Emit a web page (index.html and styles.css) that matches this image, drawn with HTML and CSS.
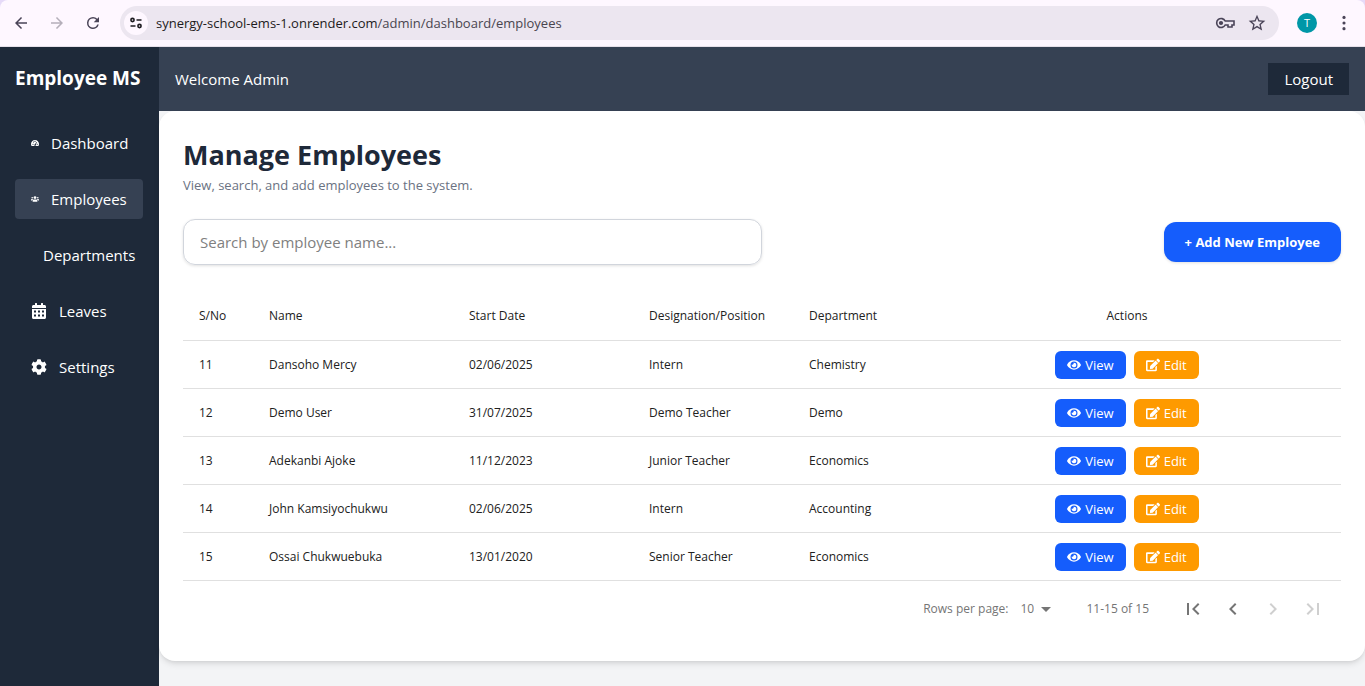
FILE: index.html
```
<!DOCTYPE html>
<html lang="en">
<head>
<meta charset="utf-8">
<title>Employee MS</title>
<link rel="stylesheet" href="styles.css">
</head>
<body>
<svg class="sprite" aria-hidden="true">
  <symbol id="eye" viewBox="0 0 576 512"><path d="M572.52 241.4C518.29 135.59 410.93 64 288 64S57.68 135.64 3.48 241.41a32.35 32.35 0 0 0 0 29.19C57.71 376.41 165.07 448 288 448s230.32-71.64 284.52-177.41a32.35 32.35 0 0 0 0-29.19zM288 400a144 144 0 1 1 144-144 143.93 143.93 0 0 1-144 144zm0-240a95.31 95.31 0 0 0-25.31 3.79 47.85 47.85 0 0 1-66.9 66.9A95.78 95.78 0 1 0 288 160z"/></symbol>
  <symbol id="edit" viewBox="0 0 576 512"><path d="M402.6 83.2l90.2 90.2c3.8 3.8 3.8 10 0 13.8L274.4 405.6l-92.8 10.3c-12.4 1.4-22.9-9.1-21.5-21.5l10.3-92.8L388.8 83.2c3.8-3.8 10-3.8 13.8 0zm162-22.9l-48.8-48.8c-15.2-15.2-39.9-15.2-55.2 0l-35.4 35.4c-3.8 3.8-3.8 10 0 13.8l90.2 90.2c3.8 3.8 10 3.8 13.8 0l35.4-35.4c15.2-15.3 15.2-40 0-55.2zM384 346.2V448H64V128h229.8c3.2 0 6.2-1.3 8.5-3.5l40-40c7.6-7.6 2.2-20.5-8.5-20.5H48C21.5 64 0 85.5 0 112v352c0 26.5 21.5 48 48 48h352c26.5 0 48-21.5 48-48V306.2c0-10.7-12.9-16-20.5-8.5l-40 40c-2.2 2.3-3.5 5.3-3.5 8.5z"/></symbol>
</svg>

<header class="browser">
  <div class="toolbar">
    <button class="tool" aria-label="Back"><svg viewBox="0 0 24 24"><path d="M20 11H7.83l5.59-5.59L12 4l-8 8 8 8 1.41-1.41L7.83 13H20z"/></svg></button>
    <button class="tool tool-off" aria-label="Forward" disabled><svg viewBox="0 0 24 24"><path d="M4 11h12.17l-5.59-5.59L12 4l8 8-8 8-1.41-1.41L16.17 13H4z"/></svg></button>
    <button class="tool" aria-label="Reload"><svg viewBox="0 0 24 24"><path d="M17.65 6.35A7.96 7.96 0 0 0 12 4a8 8 0 1 0 7.73 10h-2.08A6 6 0 1 1 12 6c1.66 0 3.14.69 4.22 1.78L13 11h7V4z"/></svg></button>
    <div class="omnibox">
      <button class="site-info" aria-label="Site information"><svg viewBox="0 0 16 16" fill="none" stroke="currentColor" stroke-width="1.6"><circle cx="4.500" cy="5" r="1.600"/><path d="M8.500 5H13.500M2.500 11h5"/><circle cx="11.500" cy="11" r="1.600"/></svg></button>
      <span class="url">synergy-school-ems-1.onrender.com<span class="url-path">/admin/dashboard/employees</span></span>
      <button class="omni-btn" aria-label="Passwords"><svg viewBox="0 0 20 20" fill="none" stroke="currentColor" stroke-width="1.600"><path d="M10.200 8A4.500 4.500 0 1 0 10.200 12H13V14H17V12H19V8Z"/><circle cx="6" cy="10" r="1.300" fill="currentColor"/></svg></button>
      <button class="omni-btn" aria-label="Bookmark"><svg viewBox="0 0 24 24" fill="currentColor"><path d="M22 9.240l-7.190-.62L12 2 9.190 8.630 2 9.240l5.460 4.730L5.820 21 12 17.270 18.180 21l-1.630-7.030L22 9.240zM12 15.400l-3.760 2.270 1-4.280-3.320-2.880 4.380-.38L12 6.100l1.710 4.040 4.380.38-3.320 2.880 1 4.280L12 15.400z"/></svg></button>
    </div>
    <button class="profile" aria-label="Profile T">T</button>
    <button class="tool" aria-label="Menu"><svg viewBox="0 0 24 24"><circle cx="12" cy="4.500" r="2.100"/><circle cx="12" cy="12" r="2.100"/><circle cx="12" cy="19.500" r="2.100"/></svg></button>
  </div>
</header>

<div class="app">
  <aside class="sidebar">
    <h2 class="brand">Employee MS</h2>
    <nav class="nav">
      <a class="nav-link" href="#dashboard"><svg class="icon-tiny" viewBox="0 0 576 512"><path fill-rule="evenodd" d="M288 32C129 32 0 161 0 320c0 53 14 102 39 145 6 9 16 15 27 15h444c11 0 21-6 27-15 25-43 39-92 39-145C576 161 447 32 288 32zM144 385a42 42 0 1 1 0-84 42 42 0 0 1 0 84zm36-160a38 38 0 1 1 0-76 38 38 0 0 1 0 76zm108-125a40 40 0 1 1 0 80 40 40 0 0 1 0-80zm100 75l40 18-76 176c18 40-8 79-30 79h-68c-40-30-20-96 35-104zM448 385a42 42 0 1 1 0-84 42 42 0 0 1 0 84z"/></svg>Dashboard</a>
      <a class="nav-link nav-active" href="#employees"><svg class="icon-tiny" viewBox="0 0 640 512"><circle cx="96" cy="160" r="64"/><circle cx="544" cy="160" r="64"/><circle cx="320" cy="144" r="112"/><path d="M64 256h64c18 0 34 7 45 19-40 22-69 61-75 109H32c-18 0-32-14-32-32v-32c0-35 29-64 64-64zM512 256h64c35 0 64 29 64 64v32c0 18-14 32-32 32h-66c-6-48-35-87-75-109 11-12 27-19 45-19zM243 288h154c64 0 115 52 115 115v29c0 26-22 48-48 48H176c-26 0-48-22-48-48v-29c0-63 51-115 115-115z"/></svg>Employees</a>
      <a class="nav-link" href="#departments"><span></span>Departments</a>
      <a class="nav-link" href="#leaves"><svg class="icon" viewBox="0 0 448 512"><path fill-rule="evenodd" d="M0 464c0 26.500 21.500 48 48 48h352c26.500 0 48-21.500 48-48V192H0zM64 240h64v64H64zm128 0h64v64h-64zm128 0h64v64h-64zM64 368h64v64H64zm128 0h64v64h-64zm128 0h64v64h-64zM400 64h-48V16c0-9-7-16-16-16h-32c-9 0-16 7-16 16v48H160V16c0-9-7-16-16-16h-32c-9 0-16 7-16 16v48H48C21.500 64 0 85.500 0 112v48h448v-48c0-26.500-21.500-48-48-48z"/></svg>Leaves</a>
      <a class="nav-link" href="#settings"><svg class="icon" viewBox="0 0 512 512"><path d="M487.400 315.700l-42.600-24.600c4.300-23.200 4.300-47 0-70.200l42.600-24.600c4.900-2.800 7.100-8.600 5.500-14-11.100-35.600-30-67.800-54.700-94.600-3.800-4.100-10-5.100-14.800-2.300L380.800 110c-17.900-15.400-38.500-27.300-60.800-35.100V25.800c0-5.600-3.900-10.500-9.400-11.700-36.700-8.200-74.300-7.800-109.200 0-5.500 1.200-9.400 6.100-9.400 11.700V75c-22.200 7.900-42.800 19.800-60.800 35.100L88.700 85.500c-4.900-2.800-11-1.900-14.800 2.300-24.700 26.700-43.600 58.900-54.700 94.600-1.700 5.400.6 11.200 5.500 14L67.300 221c-4.300 23.200-4.300 47 0 70.200l-42.600 24.600c-4.900 2.800-7.100 8.600-5.500 14 11.100 35.600 30 67.800 54.700 94.600 3.800 4.100 10 5.100 14.800 2.300l42.600-24.600c17.900 15.400 38.500 27.300 60.800 35.100v49.200c0 5.600 3.900 10.500 9.400 11.700 36.700 8.200 74.300 7.800 109.200 0 5.500-1.200 9.400-6.100 9.400-11.700v-49.200c22.200-7.900 42.800-19.800 60.800-35.100l42.600 24.600c4.900 2.800 11 1.900 14.800-2.300 24.700-26.700 43.600-58.900 54.700-94.600 1.500-5.500-.7-11.300-5.600-14.100zM256 336c-44.100 0-80-35.900-80-80s35.900-80 80-80 80 35.900 80 80-35.900 80-80 80z"/></svg>Settings</a>
    </nav>
  </aside>

  <div class="content">
    <div class="topbar">
      <p class="welcome">Welcome Admin</p>
      <button class="logout">Logout</button>
    </div>
    <main class="card">
      <h1 class="title">Manage Employees</h1>
      <p class="subtitle">View, search, and add employees to the system.</p>
      <div class="actions-bar">
        <input class="search" type="text" aria-label="Search by employee name" placeholder="Search by employee name...">
        <a class="add" href="#add">+ Add New Employee</a>
      </div>
      <table class="table">
        <colgroup><col class="col-no"><col class="col-name"><col class="col-date"><col class="col-role"><col class="col-dept"><col></colgroup>
        <thead>
          <tr><th>S/No</th><th>Name</th><th>Start Date</th><th>Designation/Position</th><th>Department</th><th class="center">Actions</th></tr>
        </thead>
        <tbody>
          <tr><td>11</td><td>Dansoho Mercy</td><td>02/06/2025</td><td>Intern</td><td>Chemistry</td><td><div class="row-actions"><button class="btn view"><svg><use href="#eye"/></svg>View</button><button class="btn edit"><svg><use href="#edit"/></svg>Edit</button></div></td></tr>
          <tr><td>12</td><td>Demo User</td><td>31/07/2025</td><td>Demo Teacher</td><td>Demo</td><td><div class="row-actions"><button class="btn view"><svg><use href="#eye"/></svg>View</button><button class="btn edit"><svg><use href="#edit"/></svg>Edit</button></div></td></tr>
          <tr><td>13</td><td>Adekanbi Ajoke</td><td>11/12/2023</td><td>Junior Teacher</td><td>Economics</td><td><div class="row-actions"><button class="btn view"><svg><use href="#eye"/></svg>View</button><button class="btn edit"><svg><use href="#edit"/></svg>Edit</button></div></td></tr>
          <tr><td>14</td><td>John Kamsiyochukwu</td><td>02/06/2025</td><td>Intern</td><td>Accounting</td><td><div class="row-actions"><button class="btn view"><svg><use href="#eye"/></svg>View</button><button class="btn edit"><svg><use href="#edit"/></svg>Edit</button></div></td></tr>
          <tr><td>15</td><td>Ossai Chukwuebuka</td><td>13/01/2020</td><td>Senior Teacher</td><td>Economics</td><td><div class="row-actions"><button class="btn view"><svg><use href="#eye"/></svg>View</button><button class="btn edit"><svg><use href="#edit"/></svg>Edit</button></div></td></tr>
        </tbody>
      </table>
      <div class="pagination">
        <label for="rows">Rows per page:</label>
        <span class="rows"><select id="rows"><option>10</option><option>15</option><option>20</option></select><svg viewBox="0 0 24 24"><path d="M7 10l5 5 5-5z"/></svg></span>
        <span class="range">11-15 of 15</span>
        <div class="pages">
          <button aria-label="First page"><svg viewBox="0 0 24 24"><path d="M18.410 16.590L13.820 12l4.590-4.590L17 6l-6 6 6 6zM6 6h2v12H6z"/></svg></button>
          <button aria-label="Previous page"><svg viewBox="0 0 24 24"><path d="M15.410 7.410L14 6l-6 6 6 6 1.410-1.410L10.830 12z"/></svg></button>
          <button aria-label="Next page" disabled><svg viewBox="0 0 24 24"><path d="M10 6L8.590 7.410 13.170 12l-4.580 4.590L10 18l6-6z"/></svg></button>
          <button aria-label="Last page" disabled><svg viewBox="0 0 24 24"><path d="M5.590 7.410L10.180 12l-4.590 4.590L7 18l6-6-6-6zM16 6h2v12h-2z"/></svg></button>
        </div>
      </div>
    </main>
  </div>
</div>
</body>
</html>
```
FILE: styles.css
```
* {
  box-sizing: border-box;
  margin: 0;
}

body {
  display: flex;
  flex-direction: column;
  min-height: 100vh;
  font-family: "Segoe UI", "Open Sans", "Noto Sans", sans-serif;
  font-size: 16px;
  line-height: 24px;
  background: #f3f4f6;
}

button, input, select {
  font: inherit;
  color: inherit;
  border: 0;
  padding: 0;
  background: none;
}

a {
  color: inherit;
  text-decoration: none;
}

svg {
  display: block;
  flex: none;
  fill: currentColor;
}

.sprite {
  display: none;
}

/* Browser toolbar */
.browser {
  background: #e6daf8;
}

.toolbar {
  display: flex;
  align-items: center;
  height: 47px;
  padding: 0 12px;
  gap: 18px;
  border-bottom: 1px solid #e6e0e9;
  border-radius: 8px 8px 0 0;
  background: #fef7ff;
  color: #4a4458;
}

.tool svg {
  width: 18px;
  height: 18px;
}

.tool-off {
  color: #b5afba;
}

.omnibox {
  flex: 1;
  display: flex;
  align-items: center;
  gap: 8px;
  height: 34px;
  padding: 0 12px 0 4px;
  border-radius: 17px;
  background: #ece6f0;
}

.site-info {
  display: grid;
  place-items: center;
  width: 24px;
  height: 24px;
  border-radius: 50%;
  background: #fef7ff;
  color: #1d1b20;
}

.site-info svg {
  width: 16px;
  height: 16px;
}

.url {
  flex: 1;
  font-size: 13px;
  line-height: 20px;
  color: #1d1b20;
}

.url-path {
  color: #49454f;
}

.omni-btn {
  margin-left: 4px;
}

.omni-btn svg {
  width: 20px;
  height: 20px;
}

.omni-btn svg[fill="none"],
.site-info svg {
  fill: none;
}

.profile {
  width: 20px;
  height: 20px;
  border-radius: 50%;
  font-size: 11px;
  line-height: 20px;
  color: #fff;
  background: #0097a7;
}

/* Application shell */
.app {
  flex: 1;
  display: flex;
}

.sidebar {
  flex: none;
  width: 159px;
  padding: 17px 16px 16px 15px;
  color: #fff;
  background: #1e2939;
}

.brand {
  font-size: 19px;
  line-height: 28px;
  font-weight: 700;
  white-space: nowrap;
}

.nav {
  display: flex;
  flex-direction: column;
  gap: 16px;
  margin-top: 31px;
}

.nav-link {
  display: flex;
  align-items: center;
  gap: 12px;
  height: 40px;
  padding: 0 8px 0 16px;
  border-radius: 4px;
  font-size: 15px;
}

.nav-active {
  background: #364153;
}

.icon {
  width: 16px;
  height: 16px;
}

.icon-tiny {
  width: 8px;
  height: 8px;
}

.content {
  flex: 1;
  min-width: 0;
}

.topbar {
  display: flex;
  align-items: center;
  justify-content: space-between;
  height: 64px;
  padding: 0 16px;
  color: #fff;
  background: #364153;
  font-size: 15px;
}

.logout {
  padding: 4px 16px;
  background: #1e2939;
}

/* Employees card */
.card {
  padding: 24px;
  border-radius: 16px;
  background: #fff;
  box-shadow: 0 4px 6px -1px rgba(0, 0, 0, 0.1), 0 2px 4px -2px rgba(0, 0, 0, 0.1);
}

.title {
  font-size: 27px;
  line-height: 40px;
  font-weight: 700;
  color: #1e2939;
}

.subtitle {
  font-size: 13px;
  line-height: 20px;
  color: #6a7282;
}

.actions-bar {
  display: flex;
  align-items: center;
  justify-content: space-between;
  margin: 24px 0 25px;
}

.search {
  width: 50%;
  height: 46px;
  padding: 0 16px;
  border: 1px solid #d1d5dc;
  border-radius: 12px;
  font-size: 15px;
  box-shadow: 0 1px 3px rgba(0, 0, 0, 0.12);
}

.search::placeholder {
  color: #808080;
  opacity: 1;
}

.add {
  padding: 10px 21px;
  border-radius: 12px;
  font-size: 13px;
  line-height: 20px;
  font-weight: 700;
  color: #fff;
  background: #155dfc;
  box-shadow: 0 1px 3px rgba(0, 0, 0, 0.12);
}

.table {
  width: 100%;
  table-layout: fixed;
  border-collapse: separate;
  border-spacing: 0;
  font-size: 12px;
  line-height: 20px;
  color: #212121;
}

.col-no { width: 70px; }
.col-name { width: 200px; }
.col-date { width: 180px; }
.col-role { width: 160px; }
.col-dept { width: 120px; }

.table th,
.table td {
  height: 48px;
  padding: 1px 16px 0;
  border-bottom: 1px solid #e0e0e0;
  text-align: left;
  white-space: nowrap;
}

.table th {
  height: 51px;
  font-weight: 500;
}

.table .center {
  text-align: center;
}

.row-actions {
  display: flex;
  justify-content: center;
  gap: 8px;
}

.btn {
  display: flex;
  align-items: center;
  gap: 4px;
  padding: 4px 12px;
  border-radius: 6px;
  font-size: 13px;
  font-weight: 500;
  color: #fff;
}

.btn svg {
  width: 14px;
  height: 14px;
}

.view { background: #155dfc; }
.edit { background: #fe9a00; }

.pagination {
  display: flex;
  align-items: center;
  justify-content: flex-end;
  height: 56px;
  padding: 0 8px;
  font-size: 12px;
  color: #757575;
}

.rows {
  display: flex;
  align-items: center;
  margin: 0 28px 0 12px;
}

.rows select {
  appearance: none;
}

.rows svg {
  width: 24px;
  height: 24px;
}

.pages {
  display: flex;
  margin-left: 24px;
}

.pages button {
  display: grid;
  place-items: center;
  width: 40px;
  height: 40px;
}

.pages svg {
  width: 24px;
  height: 24px;
}

.pages button:disabled {
  color: #cfcfcf;
}
```
